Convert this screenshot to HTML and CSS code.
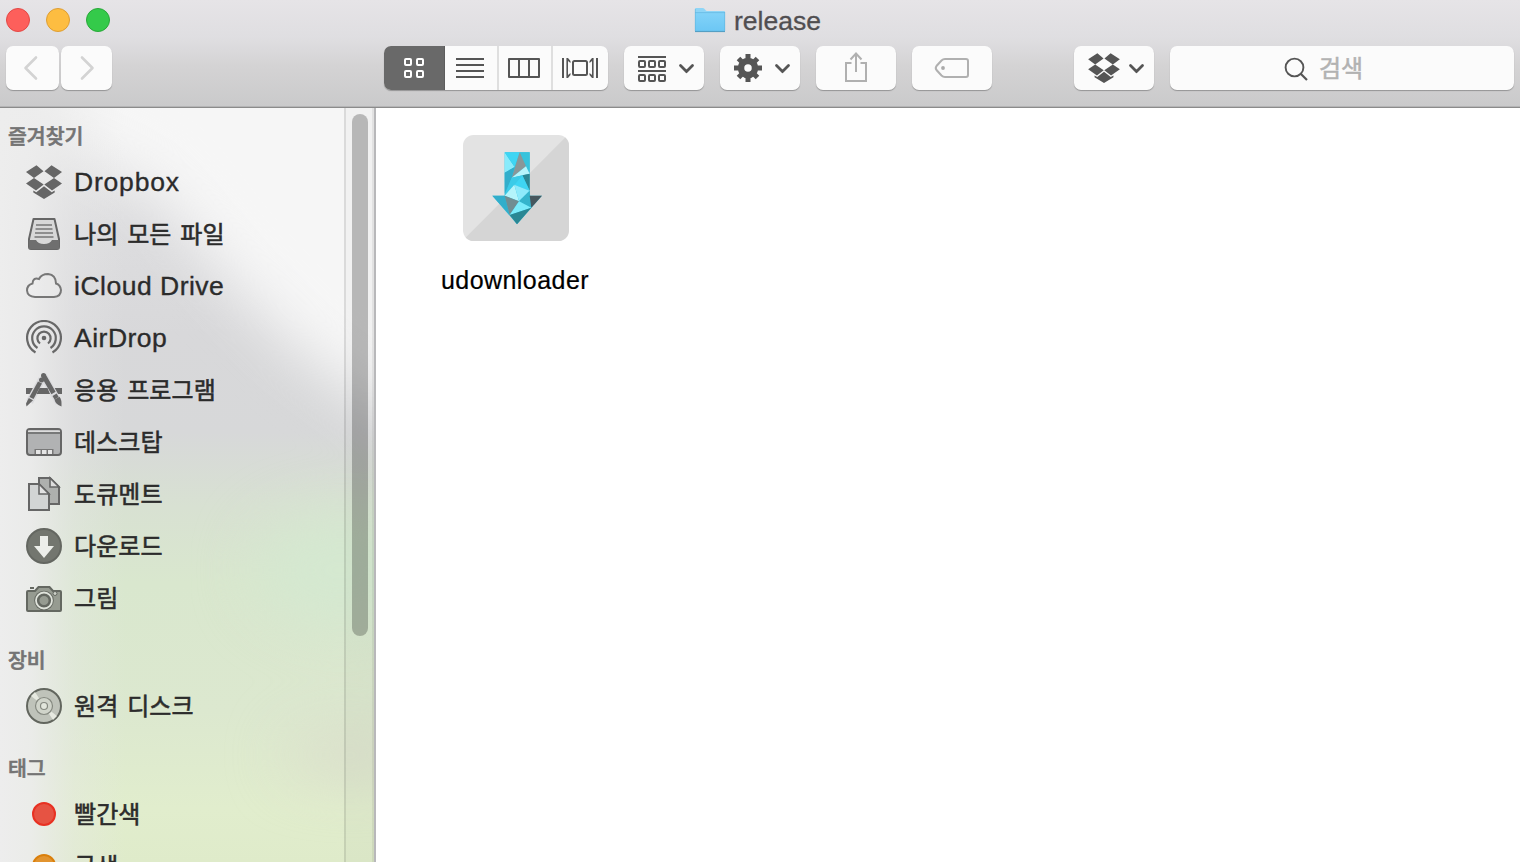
FILE: index.html
```html
<!DOCTYPE html>
<html lang="ko">
<head>
<meta charset="utf-8">
<title>release</title>
<link rel="stylesheet" href="styles.css">
</head>
<body>
<svg class="defs" width="0" height="0">
  <symbol id="dropbox" viewBox="0 0 36 34"><path d="M0 7 10.5.3 17.5 6.3 8 13ZM36 7 25.5.3 18.5 6.3 28 13ZM0 18.5 8 13 17.7 19.5 10 25.5ZM36 18.5 28 13 18.3 19.5 26 25.5ZM18 21.2 25.7 27.2 28.7 25.6V27.5L18 34 7.3 27.5V25.6L10.3 27.2Z"/></symbol>
  <symbol id="chevron" viewBox="0 0 16 10"><path d="M2 2 8 8 14 2" fill="none" stroke="#555" stroke-width="2.8" stroke-linecap="round"/></symbol>
</svg>
<div class="window">
  <header class="chrome">
    <div class="titlebar">
      <div class="lights"><span class="light close"></span><span class="light mini"></span><span class="light full"></span></div>
      <div class="title">
        <svg width="32" height="26" viewBox="0 0 32 26"><defs><linearGradient id="fg" x2="0" y2="1"><stop stop-color="#82d2f8"/><stop offset="1" stop-color="#6cc7f4"/></linearGradient></defs><path d="M1 25V2Q1 1 2 1H9Q10 1 11 2.5T13 4H30Q31 4 31 5V25Z" fill="#8fd5f6"/><path d="M1 6H31V24H1Z" fill="url(#fg)"/><path d="M1 5.6H31" stroke="#65b9e2" stroke-width=".8"/><path d="M1 24.5H31" stroke="#559fc4" stroke-width="1.2"/><path d="M1.3 2V24M30.7 5V24" stroke="#5fb3dc" stroke-width=".6"/></svg>
        <span>release</span>
      </div>
    </div>
    <div class="toolbar">
      <div class="btn back"><svg viewBox="6 46 53 44"><path d="M36 57.500 25.500 68 36 78.500" class="nav"/></svg></div>
      <div class="btn forward"><svg viewBox="61 46 51 44"><path d="M82 57.500 92.500 68 82 78.500" class="nav"/></svg></div>
      <div class="btn views">
        <div class="seg on"><svg viewBox="384 46 61 44"><g fill="none" stroke="#fff" stroke-width="2"><rect x="405" y="59" width="6" height="6" rx="1"/><rect x="417" y="59" width="6" height="6" rx="1"/><rect x="405" y="71" width="6" height="6" rx="1"/><rect x="417" y="71" width="6" height="6" rx="1"/></g></svg></div>
        <div class="seg s2"><svg viewBox="445 46 52 44"><path class="ln" d="M456 59H484M456 65H484M456 71H484M456 77H484"/></svg></div>
        <div class="seg s3"><svg viewBox="499 46 52 44"><path class="ln" d="M509 59H539V77H509ZM519 59V77M529 59V77" stroke-linejoin="round"/></svg></div>
        <div class="seg s4"><svg viewBox="553 46 55 44"><path class="ln" d="M563 58V78M597 58V78"/><path class="ln thin" d="M567.200 58V78M592.800 58V78"/><path d="M568 58 570.500 61V63L568 61ZM568 78 570.500 75V73L568 75ZM592 58 589.500 61V63L592 61ZM592 78 589.500 75V73L592 75Z" fill="#555"/><rect class="ln" x="573" y="61" width="14" height="14" rx="1.500"/></svg></div>
      </div>
      <div class="btn std g1"><svg viewBox="624 46 80 44"><path class="ln" d="M638 57H666M638 71H666"/><g class="ln"><rect x="639" y="61" width="6" height="6" rx="1"/><rect x="649" y="61" width="6" height="6" rx="1"/><rect x="659" y="61" width="6" height="6" rx="1"/><rect x="639" y="75" width="6" height="6" rx="1"/><rect x="649" y="75" width="6" height="6" rx="1"/><rect x="659" y="75" width="6" height="6" rx="1"/></g><use href="#chevron" x="678.500" y="63.500" width="16" height="10"/></svg></div>
      <div class="btn std"><svg viewBox="720 46 80 44"><circle cx="748" cy="68" r="7" fill="none" stroke="#555" stroke-width="6.500"/><path d="M748 54V60M748 76V82M734 68H740M756 68H762M738.500 58.500 742.500 62.500M753.500 73.500 757.500 77.500M757.500 58.500 753.500 62.500M742.500 73.500 738.500 77.500" stroke="#555" stroke-width="5"/><use href="#chevron" x="774.500" y="63.500" width="16" height="10"/></svg></div>
      <div class="btn std"><svg viewBox="816 46 80 44"><path class="dim" d="M851.500 63H846V81H866V63H860.500M856 72V54M850.500 59.500 856 53.500 861.500 59.500"/></svg></div>
      <div class="btn std"><svg viewBox="912 46 80 44"><path class="dim" d="M945 59H966Q968 59 968 61V75Q968 77 966 77H945Q943 77 941.500 75.500L936.500 70Q935 68 936.500 66L941.500 60.500Q943 59 945 59Z"/><circle cx="943" cy="68" r="1.900" fill="#aaa"/></svg></div>
      <div class="btn std db"><svg viewBox="1074 46 80 44"><use href="#dropbox" x="1088" y="53" width="32" height="30" fill="#555"/><use href="#chevron" x="1128.500" y="63.500" width="16" height="10"/></svg></div>
      <div class="btn search"><svg viewBox="1284 54 26 28"><circle cx="1294.500" cy="67.500" r="8.900" fill="none" stroke="#555" stroke-width="1.900"/><path d="M1300.500 73.500 1307 80" stroke="#555" stroke-width="2.200"/></svg><span>검색</span></div>
    </div>
  </header>
  <main class="body">
    <aside class="sidebar">
      <svg class="backdrop" width="376" height="754" viewBox="0 108 376 754">
        <defs>
          <linearGradient id="base" x2="0" y2="1"><stop stop-color="#ececec"/><stop offset=".16" stop-color="#dddddf"/><stop offset=".3" stop-color="#d8d8da"/><stop offset=".43" stop-color="#d7d8d9"/><stop offset=".53" stop-color="#d8e1d2"/><stop offset=".63" stop-color="#d9e7ce"/><stop offset=".8" stop-color="#dce8cf"/><stop offset=".93" stop-color="#e1edcd"/><stop offset="1" stop-color="#dfebca"/></linearGradient>
          <linearGradient id="left"><stop stop-color="#ededed"/><stop offset=".25" stop-color="#ececec" stop-opacity=".9"/><stop offset=".6" stop-color="#e8e8e8" stop-opacity=".35"/><stop offset="1" stop-color="#e8e8e8" stop-opacity="0"/></linearGradient>
          <filter id="soft" x="-50%" y="-50%" width="200%" height="200%" color-interpolation-filters="sRGB"><feGaussianBlur stdDeviation="29"/></filter>
        </defs>
        <rect y="108" width="376" height="754" fill="url(#base)"/>
        <g filter="url(#soft)">
          <path d="M-80 20H470V470L380 412 290 345 220 270 150 180 50 130-80 115Z" fill="#f6f6f6"/>
          <ellipse cx="340" cy="570" rx="85" ry="55" fill="#d4e8d0"/>
          <ellipse cx="350" cy="755" rx="65" ry="20" fill="#d9dbca"/>
        </g>
        <rect y="108" width="125" height="754" fill="url(#left)"/>
      </svg>
      <nav class="list">
        <h2>즐겨찾기</h2>
        <div class="item"><svg class="ic" viewBox="26 164 36 36"><use href="#dropbox" x="26" y="165" width="36" height="34" fill="#666"/></svg><span class="wide">Dropbox</span></div>
        <div class="item ko"><svg class="ic" viewBox="26 216 36 36"><path d="M33.500 219H54.500L59 239V247Q59 249 57 249H31Q29 249 29 247V239Z" fill="#d8d8d8" stroke="#666" stroke-width="2" stroke-linejoin="round"/><path d="M29 240H36Q38 244 44 244T52 240H59V249H29Z" fill="#6f6f6f"/><path d="M36 225H52M35.500 229H52.500M35 233H53M34.500 237H53.500" stroke="#777" stroke-width="1.700"/></svg><span>나의 모든 파일</span></div>
        <div class="item"><svg class="ic" viewBox="26 268 36 36"><path d="M35 297H54Q61 296.500 61 290 60.500 285 56 283.500 56 275 48 274 41.500 274 39 279 33 277 32.500 283.500 27 285 27 290.500 27.500 296.500 35 297Z" fill="#fff" fill-opacity=".15" stroke="#777" stroke-width="2"/></svg><span>iCloud Drive</span></div>
        <div class="item"><svg class="ic" viewBox="26 320 36 36"><g fill="none" stroke="#686868" stroke-width="2.200"><path d="M35.500 352.500A16.900 16.900 0 1 1 52.500 352.500"/><path d="M37.500 348A11.800 11.800 0 1 1 50.500 348"/><path d="M40 343.500A6.600 6.600 0 1 1 48 343.500"/></g><circle cx="44" cy="338" r="2.300" fill="#666"/></svg><span>AirDrop</span></div>
        <div class="item ko"><svg class="ic" viewBox="26 372 36 36"><path d="M26 388H62V394H26Z" fill="#666"/><path d="M42 379 29.500 402M43 375 59 403" stroke="#dadadd" stroke-width="7.500"/><path d="M39.500 388H47.500L50 394H36.500Z" fill="#666"/><path d="M40 382.500 31.500 398" stroke="#666" stroke-width="4.600"/><path d="M28.800 398 33 400.300 26.500 406.500 26 403.500Z" fill="#666"/><circle cx="41.500" cy="380" r="2.500" fill="#666"/><path d="M43.500 375.500 53.500 393M54.600 394.800 56.600 398.200" stroke="#666" stroke-width="4.800"/><circle cx="43.500" cy="375.500" r="2.500" fill="#666"/><path d="M54.500 399.500 59.500 396.800Q62 400 61.500 406.500 55.500 404.500 54.500 399.500Z" fill="#666"/></svg><span>응용 프로그램</span></div>
        <div class="item ko"><svg class="ic" viewBox="26 424 36 36"><rect x="27" y="429" width="34" height="26" rx="3" fill="#b1b2b3" stroke="#666" stroke-width="2"/><path d="M28 430.500H60V432H28Z" fill="#ddd"/><path d="M27 433H61" stroke="#666" stroke-width="1.600"/><path d="M34.500 449H53.500V454H34.500Z" fill="#777"/><path d="M36 450H40.500V454H36ZM42 450H46.500V454H42ZM48 450H52V454H48Z" fill="#e5e5e5"/></svg><span>데스크탑</span></div>
        <div class="item ko"><svg class="ic" viewBox="26 476 36 36"><path d="M39 478H50L59 487V504H39Z" fill="#aeb0ae" stroke="#666" stroke-width="2"/><path d="M50 478V487H59Z" fill="#ddd" stroke="#666" stroke-width="1.600"/><path d="M29 484H39L49 494V510H29Z" fill="#d2d4d4" stroke="#666" stroke-width="2"/><path d="M39 484V494H49Z" fill="#e2e2e2" stroke="#666" stroke-width="1.600"/></svg><span>도큐멘트</span></div>
        <div class="item ko"><svg class="ic" viewBox="26 528 36 36"><circle cx="44" cy="546" r="17" fill="#73766f" stroke="#646761" stroke-width="2"/><path d="M40 536H48V546H54L44 558 34 546H40Z" fill="#eceeea"/></svg><span>다운로드</span></div>
        <div class="item ko"><svg class="ic" viewBox="26 580 36 36"><path d="M28 591H35L38.500 587H49.500L53 591H60Q61 591 61 592V610Q61 611 60 611H28Q27 611 27 610V592Q27 591 28 591Z" fill="#969b91" stroke="#646861" stroke-width="2"/><path d="M30 588H34" stroke="#646861" stroke-width="2"/><circle cx="55" cy="593.500" r="2" fill="#ccd0c7" stroke="#646861"/><circle cx="44" cy="600.500" r="9.800" fill="#646861"/><circle cx="44" cy="600.500" r="8" fill="none" stroke="#e0e4dc" stroke-width="1.800"/><circle cx="44" cy="600.500" r="5.300" fill="#969b91" stroke="#646861" stroke-width="1.500"/></svg><span>그림</span></div>
        <h2>장비</h2>
        <div class="item ko"><svg class="ic" viewBox="26 688 36 36"><circle cx="44" cy="706" r="17" fill="#bfc3ba" stroke="#62665e" stroke-width="2"/><path d="M44 706 31 696 35 692ZM44 706 57 716 53 720Z" fill="#e6e9e0"/><circle cx="44" cy="706" r="8.500" fill="#d0d4ca" stroke="#858980" stroke-width="1.200"/><circle cx="44" cy="706" r="3.500" fill="#e2e6dc" stroke="#858980" stroke-width="1.200"/></svg><span>원격 디스크</span></div>
        <h2>태그</h2>
        <div class="item ko"><span class="tag red"></span><span>빨간색</span></div>
        <div class="item ko"><span class="tag gold"></span><span>금색</span></div>
      </nav>
      <div class="track"><div class="thumb"></div></div>
    </aside>
    <section class="files">
      <div class="file">
        <svg width="106" height="106" viewBox="100 44 318 318">
          <defs><clipPath id="rc"><rect x="100" y="44" width="318" height="318" rx="32"/></clipPath></defs>
          <g clip-path="url(#rc)"><path d="M100 44H418V362H100Z" fill="#e3e3e3"/><path d="M418 40V362H98Z" fill="#d5d5d5"/></g>
          <path d="M225 96H300V226H337L262 312 188 226H225Z" fill="#36bfdb"/>
          <path d="M225 96 255 140 225 157Z" fill="#89ebfb"/>
          <path d="M225 96H270L255 140Z" fill="#3ed5f3"/>
          <path d="M270 96H300V158L288 138Z" fill="#37c3dc"/>
          <path d="M270 96 289 138 246 172Z" fill="#899799"/>
          <path d="M289 138 300 160 246 172Z" fill="#b4f4fb"/>
          <path d="M225 157 255 140 246 172 225 220Z" fill="#32aecb"/>
          <path d="M246 172 278 165 254 193 225 224Z" fill="#3bcbe8"/>
          <path d="M278 165 300 160V211Z" fill="#2a8794"/>
          <path d="M278 165 300 211 254 193Z" fill="#3ed5f3"/>
          <path d="M254 193 268 243 225 226Z" fill="#b4f4fb"/>
          <path d="M254 193 300 211 268 243Z" fill="#8eeafb"/>
          <path d="M300 211 305 262 268 243Z" fill="#36b4cc"/>
          <path d="M188 226H225L240 284Z" fill="#32aecb"/>
          <path d="M225 226 268 243 240 284Z" fill="#718d92"/>
          <path d="M268 243 305 262 240 284Z" fill="#7cebfb"/>
          <path d="M240 284 305 262 262 312Z" fill="#2a8794"/>
          <path d="M300 226H337L305 262Z" fill="#46575e"/>
        </svg>
        <span>udownloader</span>
      </div>
    </section>
  </main>
</div>
</body>
</html>
```
FILE: styles.css
```css
* { box-sizing: border-box; }
body {
  margin: 0;
  overflow: hidden;
  font-family: "Liberation Sans", "Noto Sans CJK KR", sans-serif;
}
.defs { position: absolute; }
svg { display: block; flex: none; }
.window { width: 1520px; height: 862px; display: flex; flex-direction: column; overflow: hidden; }

.chrome {
  height: 108px;
  flex: none;
  background: linear-gradient(#e6e4e7, #dfdee1 38px, #d4d3d4 66px, #cacacb 106px);
  border-bottom: 1px solid #8b8b8b;
  box-shadow: inset 0 -1px #b4b4b5;
}
.titlebar { height: 46px; padding: 8px 6px 0; display: grid; grid-template-columns: 688px 1fr; align-items: start; }
.lights { display: flex; gap: 16px; }
.light { width: 24px; height: 24px; border-radius: 50%; border: 1px solid; }
.close { background: #fd5f5b; border-color: #e34845; }
.mini { background: #fdbd41; border-color: #de9e34; }
.full { background: #34ca4a; border-color: #28a838; }
.title { display: flex; gap: 8px; margin-top: -1px; font-size: 26.5px; line-height: 28px; color: #504e51; -webkit-text-stroke: .3px #504e51; }

.toolbar { display: flex; padding-left: 6px; }
.btn { height: 44px; border-radius: 7px; background: #fbfbfb; box-shadow: 0 1px 1px rgba(0, 0, 0, .28); margin-right: 16px; overflow: visible; }
.btn svg { height: 44px; width: 100%; }
.back { width: 53px; margin-right: 2px; }
.forward { width: 51px; margin-right: 272px; }
.views { width: 224px; display: flex; overflow: hidden; }
.seg { border-right: 2px solid #dfdfdf; }
.seg.on { width: 61px; background: #696969; border-right: 1px solid #5d5d5d; }
.seg.on svg { width: 61px; }
.s2, .s3 { width: 54px; }
.seg.s4 { width: 55px; border: 0; }
.std { width: 80px; }
.std.db { margin-left: 66px; }
.search { width: 344px; margin: 0; display: flex; align-items: center; padding-left: 114px; gap: 9px; color: #b2b2b2; font-size: 24px; font-family: "Noto Sans CJK KR", sans-serif; line-height: 44px; -webkit-text-stroke: .5px #b2b2b2; }
.btn.search svg { width: 26px; height: 28px; margin-top: 0; }
.search span { margin-top: -2px; }
.nav { fill: none; stroke: #d3d3d3; stroke-width: 2.6; stroke-linecap: round; stroke-linejoin: round; }
.ln { fill: none; stroke: #555; stroke-width: 2; }
.thin { stroke-width: 1.6; }
.dim { fill: none; stroke: #b0b0b0; stroke-width: 2; }

.body { display: flex; height: 754px; }
.sidebar { width: 376px; flex: none; position: relative; display: flex; overflow: hidden; border-right: 2px solid #b8b8ba; }
.backdrop { position: absolute; left: 0; top: 0; }
.list { position: relative; width: 344px; flex: none; }
h2 {
  margin: 0;
  padding: 16px 0 0 8px;
  height: 56px;
  font: 500 20.5px/39px "Noto Sans CJK KR", sans-serif;
  color: #747474;
  -webkit-text-stroke: .6px #747474;
}
h2:first-child { height: 48px; padding-top: 8px; }
.item { height: 52px; display: flex; align-items: center; padding-left: 26px; gap: 12px; font-size: 26.5px; letter-spacing: .5px; color: #2b2b2b; -webkit-text-stroke: .35px #2b2b2b; line-height: 54px; }
.item .wide { letter-spacing: .8px; }
.ko { font-family: "Noto Sans CJK KR", sans-serif; font-size: 24px; letter-spacing: .1px; word-spacing: 2px; -webkit-text-stroke: .55px #2b2b2b; line-height: 52px; }
.ko > span:last-child { margin-top: -2px; }
.ic { width: 36px; height: 36px; }
.tag { width: 24px; height: 24px; margin: 0 6px; border-radius: 50%; flex: none; border: 2px solid; }
.red { background: #e65343; border-color: #e83122; }
.gold { background: #e2942f; border-color: #da7f0b; }
.track { position: relative; width: 30px; flex: none; border-left: 2px solid rgba(0, 0, 0, .09); border-right: 2px solid rgba(0, 0, 0, .06); background: rgba(0, 0, 0, .02); padding: 6px; }
.thumb { width: 16px; height: 522px; border-radius: 8px; background: rgba(0, 0, 0, .24); }

.files { flex: 1; background: #fff; padding: 27px 0 0 55px; }
.file { width: 168px; display: flex; flex-direction: column; align-items: center; gap: 21px; font-size: 25px; letter-spacing: .45px; line-height: 36px; color: #000; -webkit-text-stroke: .2px #000; }
.file svg { margin-left: 2px; }
```
